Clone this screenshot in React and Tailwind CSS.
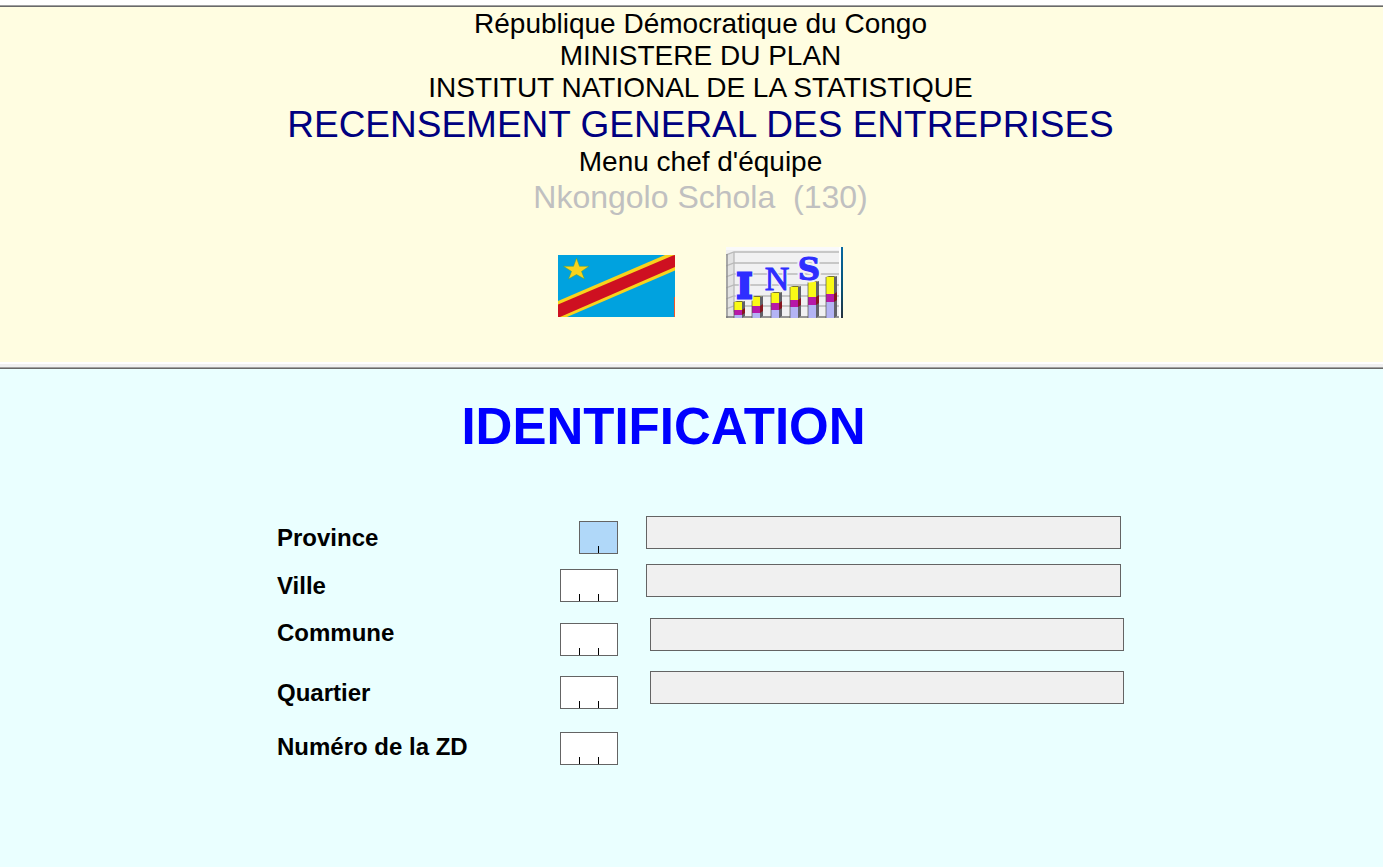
const rows = [
  { id: "province", label: "Province", digits: 2, height: "h-[48px]", align: "mt-[5px]", name: "ml-7", active: true },
  { id: "ville", label: "Ville", digits: 3, height: "h-[54px]", align: "mt-[5px]", name: "ml-7" },
  { id: "commune", label: "Commune", digits: 3, height: "h-[53px]", align: "-mt-[2px]", name: "ml-8" },
  { id: "quartier", label: "Quartier", digits: 3, height: "h-[56px]", align: "mt-[5px]", name: "ml-8" },
  { id: "zd", label: "Numéro de la ZD", digits: 3, height: "h-[48px]", align: "mt-[3px]", name: null },
];

const bars = [
  { x: 8, y: 55, p: 63, l: 68 },
  { x: 26, y: 50, p: 59, l: 66 },
  { x: 45, y: 46, p: 56, l: 63 },
  { x: 64, y: 40, p: 53, l: 60 },
  { x: 82, y: 35, p: 50, l: 58 },
  { x: 100, y: 30, p: 47, l: 55 },
];

function Flag() {
  return (
    <svg width="117" height="62" viewBox="0 0 117 62" role="img" aria-label="Drapeau">
      <rect width="117" height="62" fill="#00a2df" />
      <path d="M0 46L107 0H117V15.500L9 62H0Z" fill="#f8d31c" />
      <path d="M0 49.500L115 0.500L117 0V12L2 62H0Z" fill="#ce1021" />
      <path d="M18.500 3L21.500 11.300H31L23.500 16.400L26.500 24L18.500 19.500L10.500 24L13.500 16.400L5.500 11.300H15.500Z" fill="#f8d31c" stroke="#4f9e3c" strokeWidth="0.500" />
      <path d="M116.500 42V62" stroke="#f0552a" />
    </svg>
  );
}

function InsLogo() {
  return (
    <svg width="117" height="71" viewBox="0 0 117 71" role="img" aria-label="INS">
      <defs>
        <linearGradient id="edge" x1="0" y1="0" x2="0" y2="1">
          <stop offset="0" stopColor="#0868a0" />
          <stop offset="0.600" stopColor="#075275" />
          <stop offset="1" stopColor="#28313c" />
        </linearGradient>
      </defs>
      <rect width="117" height="71" fill="#f1f1f2" />
      <rect width="117" height="3" fill="#fafafa" />
      <path d="M0 8L8 5V68L0 71Z" fill="#e2e2e2" />
      <g fill="none" stroke="#b9b9b9" strokeWidth="1.300">
        <path d="M0 8L8 5H114" />
        <path d="M0 19L8 16H114" />
        <path d="M0 30L8 27H114" />
        <path d="M0 41L8 38H114" />
        <path d="M0 52L8 49H114" />
        <path d="M0 62L8 59H114" />
        <path d="M8 5V65" />
      </g>
      <path d="M1 7V71" stroke="#929292" strokeWidth="1.500" />
      <path d="M0 70H114" stroke="#777777" strokeWidth="1.500" />
      {bars.map((b) => (
        <g key={b.x}>
          <path d={`M${b.x + 8} ${b.y}L${b.x + 11} ${b.y - 1}V69L${b.x + 8} 71Z`} fill="#626268" />
          <path d={`M${b.x + 8} ${b.p}L${b.x + 11} ${b.p - 2}V${b.l - 2}L${b.x + 8} ${b.l}Z`} fill="#86151f" />
          <path d={`M${b.x} ${b.y}L${b.x + 3} ${b.y - 1}H${b.x + 10}L${b.x + 8} ${b.y}Z`} fill="#77732b" />
          <rect x={b.x} y={b.y} width="8" height={71 - b.y} fill="#fafa16" />
          <rect x={b.x} y={b.p} width="8" height={71 - b.p} fill="#b719a8" />
          <rect x={b.x} y={b.l} width="8" height={71 - b.l} fill="#b4b4f4" />
          <path d={`M${b.x} ${b.y}V71`} stroke="#555548" strokeWidth="0.700" />
        </g>
      ))}
      <g fill="#f1f1f5" stroke="#f1f1f5" strokeWidth="5" fontWeight="700" textAnchor="middle">
        <text x="18.500" y="51" fontSize="33" fontFamily="DejaVu Serif, serif">I</text>
        <text x="51" y="43" fontSize="34" strokeWidth="3" fontWeight="400" fontFamily="Liberation Serif, serif">N</text>
        <text x="83" y="33" fontSize="31" fontFamily="DejaVu Serif, serif">S</text>
      </g>
      <g fill="#2e2eff" stroke="#2e2eff" fontWeight="700" textAnchor="middle">
        <text x="18.500" y="51" fontSize="33" strokeWidth="3" fontFamily="DejaVu Serif, serif">I</text>
        <text x="51" y="43" fontSize="34" strokeWidth="1" fontWeight="400" fontFamily="Liberation Serif, serif">N</text>
        <text x="83" y="33" fontSize="31" strokeWidth="1" fontFamily="DejaVu Serif, serif">S</text>
      </g>
      <rect x="113" width="2" height="71" fill="#ffffff" />
      <rect x="115" width="2" height="71" fill="url(#edge)" />
    </svg>
  );
}

function CodeField({ row }) {
  return (
    <div className="mt-[5px] flex w-[58px] shrink-0 justify-end">
      <div className={row.digits === 2 ? "relative w-[39px]" : "relative w-[58px]"}>
        <input
          id={row.id}
          type="text"
          inputMode="numeric"
          maxLength={row.digits}
          className={`block h-[33px] w-full rounded-none border border-[#646464] px-1 font-bold outline-none ${row.active ? "bg-[#b0d8f9]" : "bg-white"}`}
        />
        <span className="absolute bottom-px left-[19px] h-[7px] w-px bg-black" />
        {row.digits === 3 && <span className="absolute bottom-px left-[38px] h-[7px] w-px bg-black" />}
      </div>
    </div>
  );
}

export default function App() {
  return (
    <div className="flex min-h-screen flex-col bg-white pt-[5px] font-['Liberation_Sans',Arial,sans-serif] text-black">
      <header className="flex flex-col items-center border-t border-[#a0a0a0]">
        <div className="flex w-full flex-col items-center border-t border-[#696969] bg-[#fffde1] pt-px pb-11 pl-[18px] text-center text-[28px] leading-8">
          <p>République Démocratique du Congo</p>
          <p>MINISTERE DU PLAN</p>
          <p>INSTITUT NATIONAL DE LA STATISTIQUE</p>
          <h1 className="text-[37px] leading-[42px] text-[#000080]">RECENSEMENT GENERAL DES ENTREPRISES</h1>
          <p>Menu chef d'équipe</p>
          <p className="whitespace-pre text-[32px] leading-[39px] text-[#c0c0c0]">{"Nkongolo Schola  (130)"}</p>
          <div className="mt-[30px] flex items-end gap-[51px]">
            <div className="pb-px">
              <Flag />
            </div>
            <InsLogo />
          </div>
        </div>
      </header>
      <div className="h-[5px] border-t-2 border-white bg-[#f0f0f0]" />
      <main className="flex flex-1 flex-col border-t border-[#a0a0a0]">
        <div className="flex flex-1 flex-col items-center border-t border-[#696969] bg-[#eaffff] pl-[18px]">
          <h2 className="mt-7 pr-[74px] text-[51px] leading-[60px] font-bold text-[#0000ff]">IDENTIFICATION</h2>
          <form className="mt-[59px] w-[847px] max-w-full">
            {rows.map((row) => (
              <div key={row.id} className={`flex items-start ${row.height}`}>
                <label htmlFor={row.id} className={`w-[283px] shrink-0 text-[24px] leading-[33px] font-bold ${row.align}`}>
                  {row.label}
                </label>
                <CodeField row={row} />
                {row.name && (
                  <input
                    type="text"
                    readOnly
                    aria-label={`${row.label} - nom`}
                    className={`h-[33px] w-[475px] min-w-0 rounded-none border border-[#646464] bg-[#f0f0f0] px-2 outline-none ${row.name}`}
                  />
                )}
              </div>
            ))}
          </form>
        </div>
      </main>
    </div>
  );
}
